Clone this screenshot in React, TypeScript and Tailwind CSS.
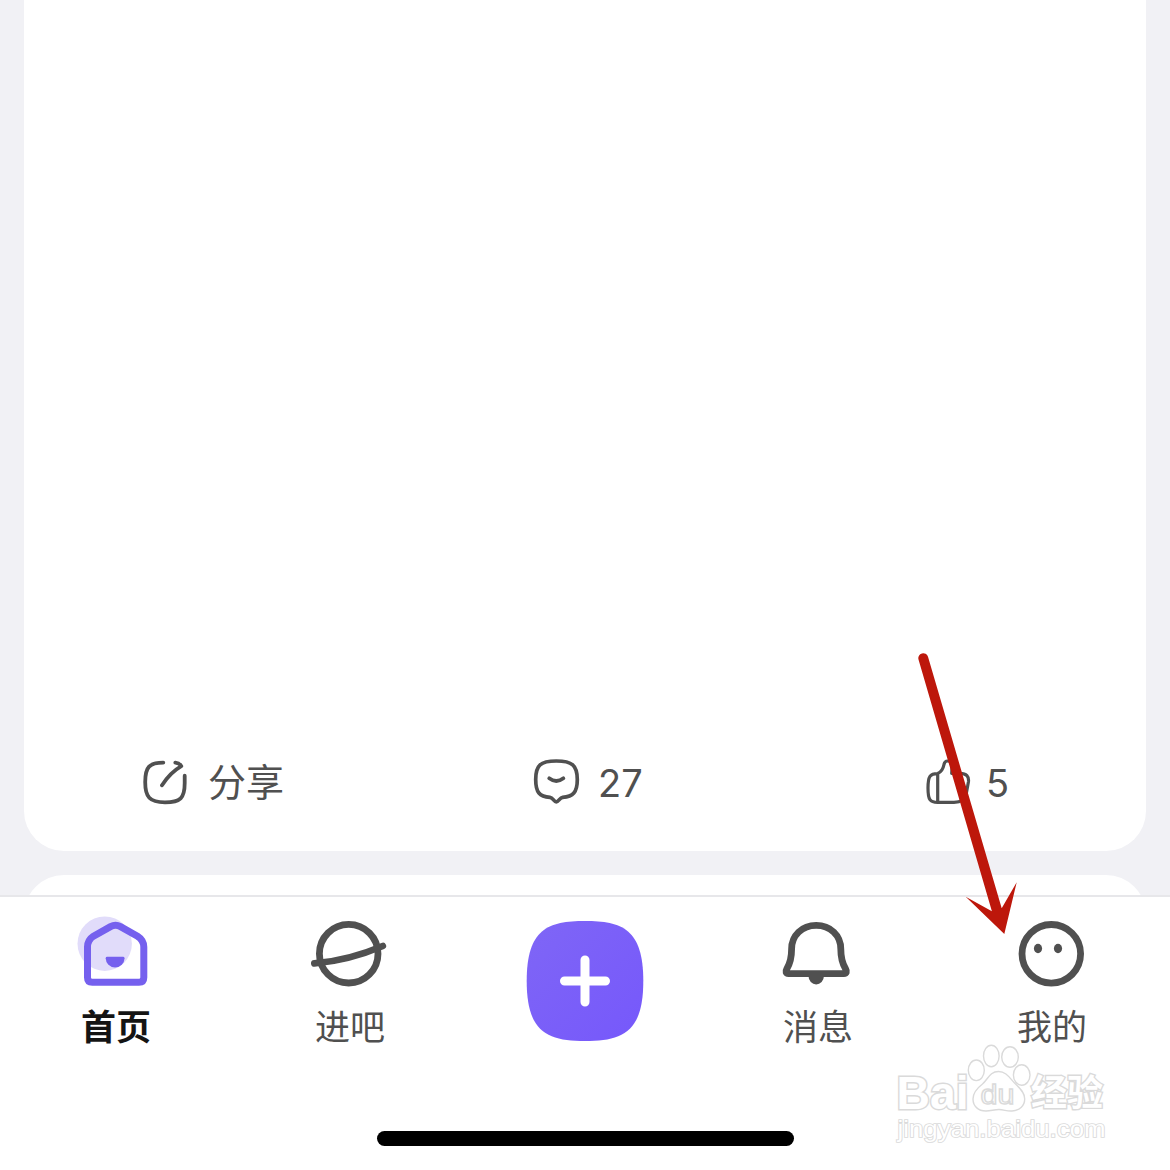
import type { ReactNode } from 'react';

const ShareIcon = () => (
  <svg className="w-[50px] h-[50px]" viewBox="0 0 50 50" fill="none" stroke="#505050" strokeWidth="3.8" strokeLinecap="round" strokeLinejoin="round">
    <path d="M23.3 5.6C9.5 5.6 5.2 10 5.2 25S9.5 45.3 25 45.3 44.7 41 44.7 26V18.7" />
    <path d="M22 28.3C27 20.5 33 14 41.3 9.2C40 7 38 5.8 35.3 5.6" />
  </svg>
);

const CommentIcon = () => (
  <svg className="w-[50px] h-[50px]" viewBox="0 0 50 50" fill="none" stroke="#505050" strokeWidth="3.7" strokeLinecap="round" strokeLinejoin="round">
    <path d="M25.3 4C9.5 4 4.7 8 4.7 22.5C4.7 35.5 8.5 39.5 19 40.4C22 40.7 23 44.8 25.3 44.8S28.6 40.7 31.6 40.4C42 39.5 46.3 35.5 46.3 22.5C46.3 8 41 4 25.3 4Z" />
    <path d="M18.2 21.3Q25.3 26.7 32.4 21.3" />
  </svg>
);

const LikeIcon = () => (
  <svg className="w-[50px] h-[50px]" viewBox="0 0 50 50" fill="none" stroke="#505050" strokeWidth="3.2" strokeLinecap="round" strokeLinejoin="round">
    <path d="M14.7 16.6C19 14.8 20.2 11.5 21 7.5C21.5 4.8 22.6 4 24.7 4C29.8 4 29.2 9.5 28.7 16.3H37C43.5 16.3 46.2 19.5 45.4 25L43.3 36.5C42 43.6 37.5 45.4 31 45.4H14.7C7 45.4 5 43 5 31S7 16.6 14.7 16.6ZM14.7 17V45" />
  </svg>
);

const HomeIcon = () => (
  <svg className="w-20 h-20" viewBox="0 0 80 80" fill="none">
    <circle cx="27.7" cy="31.7" r="27.2" fill="#e1dcfa" />
    <path
      d="M33.5 14.6Q38.5 12 43.5 14.6L60.5 24.2Q66.8 28.2 66.8 35V65.5Q66.8 70.2 62 70.2H15.3Q10.5 70.2 10.5 65.5V35Q10.5 28.2 16.5 24.2Z"
      stroke="#7560ee"
      strokeWidth="7"
    />
    <path d="M28.7 46.2Q28.7 44.8 30.2 44.8H46Q47.5 44.8 47.5 46.2A9.4 9.4 0 0 1 28.7 46.2Z" fill="#7560ee" />
  </svg>
);

const PlanetIcon = () => (
  <svg className="w-20 h-20" viewBox="0 0 80 80" fill="none" stroke="#505050" strokeWidth="6.8" strokeLinecap="round">
    <circle cx="37.7" cy="41.7" r="29.3" />
    <path d="M3.4 51.4Q38 48.5 71.8 34" />
  </svg>
);

const BellIcon = () => (
  <svg className="w-20 h-20" viewBox="0 0 80 80" fill="none" stroke="#505050" strokeWidth="6.8" strokeLinejoin="round">
    <path d="M37.2 13.4C23 13.4 12.6 23.5 12.6 37C12.6 46 11.5 50.5 8 56.5C6.2 59.8 6.8 61.6 9.6 61.6H64.8C67.6 61.6 68.2 59.8 66.4 56.5C62.9 50.5 61.8 46 61.8 37C61.8 23.5 51.4 13.4 37.2 13.4Z" />
    <path d="M29.5 64H44.9A7.7 8.4 0 0 1 29.5 64Z" fill="#505050" stroke="none" />
  </svg>
);

const FaceIcon = () => (
  <svg className="w-20 h-20" viewBox="0 0 80 80" fill="none">
    <circle cx="38.3" cy="41.8" r="29.3" stroke="#505050" strokeWidth="6.8" />
    <ellipse cx="25" cy="36.5" rx="4.1" ry="4.7" fill="#505050" />
    <ellipse cx="45" cy="36.5" rx="4.1" ry="4.7" fill="#505050" />
  </svg>
);

const PublishIcon = () => (
  <svg className="w-[118px] h-[122px]" viewBox="0 0 118 122" fill="none">
    <defs>
      <linearGradient id="publish" x1="0" y1="0" x2="1" y2="1">
        <stop offset="0" stopColor="#7f66f6" />
        <stop offset="1" stopColor="#7658fb" />
      </linearGradient>
    </defs>
    <path
      d="M59 1C96 1 117.3 9 117.3 61S96 121 59 121 .7 113 .7 61 22 1 59 1Z"
      fill="url(#publish)"
    />
    <path d="M38.5 61H79.5M59 40V82" stroke="#fff" strokeWidth="9" strokeLinecap="round" />
  </svg>
);

const PointerArrow = () => (
  <svg className="absolute left-[900px] top-[640px] w-[150px] h-[310px]" viewBox="0 0 150 310" fill="#bd170b">
    <path d="M18.5 19.5A4.9 4.9 0 0 1 28 16.8L101.7 268.3L116.7 242.3L104.3 293.9L65.7 256.8L91.9 271.3Z" />
  </svg>
);

const Watermark = () => (
  <svg
    className="absolute left-[885px] top-[1035px] w-[235px] h-[120px] font-['Liberation_Sans','Noto_Sans_CJK_SC',sans-serif]"
    viewBox="0 0 235 120"
    fill="#fff"
    stroke="#dadada"
    strokeWidth="1.4"
  >
    <text x="11.5" y="73.5" fontSize="46" fontWeight="700" textLength="72" lengthAdjust="spacingAndGlyphs" strokeWidth="3" paintOrder="stroke">Bai</text>
    <ellipse cx="91.3" cy="35.3" rx="8" ry="10.3" />
    <ellipse cx="106.3" cy="21" rx="7.8" ry="10.8" />
    <ellipse cx="125" cy="22" rx="8.3" ry="10.3" />
    <ellipse cx="136.7" cy="40" rx="8.3" ry="10.3" />
    <path d="M113.5 36.5C105 36.5 103 44 97.5 49C91 54 88 58 88 64C88 71 93 76 101 76C106 76 109 74.5 114 74.5S122 76.5 127 76C135 75.5 139.7 70.5 139.7 64C139.7 58 136 54 130.5 49C125 44 122 36.5 113.5 36.5Z" />
    <text x="95.5" y="68.5" fontSize="27" textLength="34" lengthAdjust="spacingAndGlyphs">du</text>
    <text x="146" y="71" fontSize="36" fontWeight="700" textLength="72" strokeWidth="2.8" paintOrder="stroke">经验</text>
    <text x="12.5" y="101.5" fontSize="24" textLength="208" lengthAdjust="spacingAndGlyphs" strokeWidth="1.7" paintOrder="stroke">jingyan.baidu.com</text>
  </svg>
);

interface TabProps {
  icon: ReactNode;
  label: string;
  active?: boolean;
}

const Tab = ({ icon, label, active }: TabProps) => (
  <button className="flex flex-col items-center pt-[15px]">
    {icon}
    <span
      className={
        active
          ? 'mt-[15px] mr-[2px] text-[35px] leading-[40px] font-bold text-[#141414]'
          : 'mt-[15px] mr-[2px] text-[35px] leading-[40px] text-[#505050]'
      }
    >
      {label}
    </span>
  </button>
);

const App = () => {
  return (
    <div className="relative flex flex-col w-[1170px] h-[1170px] overflow-hidden bg-white font-['Inter','Noto_Sans_CJK_SC',sans-serif]">
      <main className="h-[895px] px-6 bg-[#f1f1f5] overflow-hidden">
        <article className="flex flex-col justify-end h-[851px] pb-[43px] bg-white rounded-b-[40px]">
          <div className="grid grid-cols-3 text-[38px] leading-[50px] text-[#505050]">
            <button className="flex items-center gap-[18px] pl-[116px]">
              <ShareIcon />
              <span>分享</span>
            </button>
            <button className="flex items-center gap-[17px] pl-[133px]">
              <CommentIcon />
              <span className="pt-0.5">27</span>
            </button>
            <button className="flex items-center gap-[13px] pl-[151px]">
              <LikeIcon />
              <span className="pt-0.5">5</span>
            </button>
          </div>
        </article>
        <article className="h-40 mt-6 bg-white rounded-t-[40px]" />
      </main>

      <nav className="grid grid-cols-5 h-[236px] border-t-2 border-[#e7e7ea] bg-white">
        <Tab icon={<HomeIcon />} label="首页" active />
        <Tab icon={<PlanetIcon />} label="进吧" />
        <button className="flex justify-center items-start pt-[23px]">
          <PublishIcon />
        </button>
        <Tab icon={<BellIcon />} label="消息" />
        <Tab icon={<FaceIcon />} label="我的" />
      </nav>

      <div className="w-[417px] h-[15px] ml-[377px] rounded-full bg-black" />

      <PointerArrow />
      <Watermark />
    </div>
  );
};

export default App;
